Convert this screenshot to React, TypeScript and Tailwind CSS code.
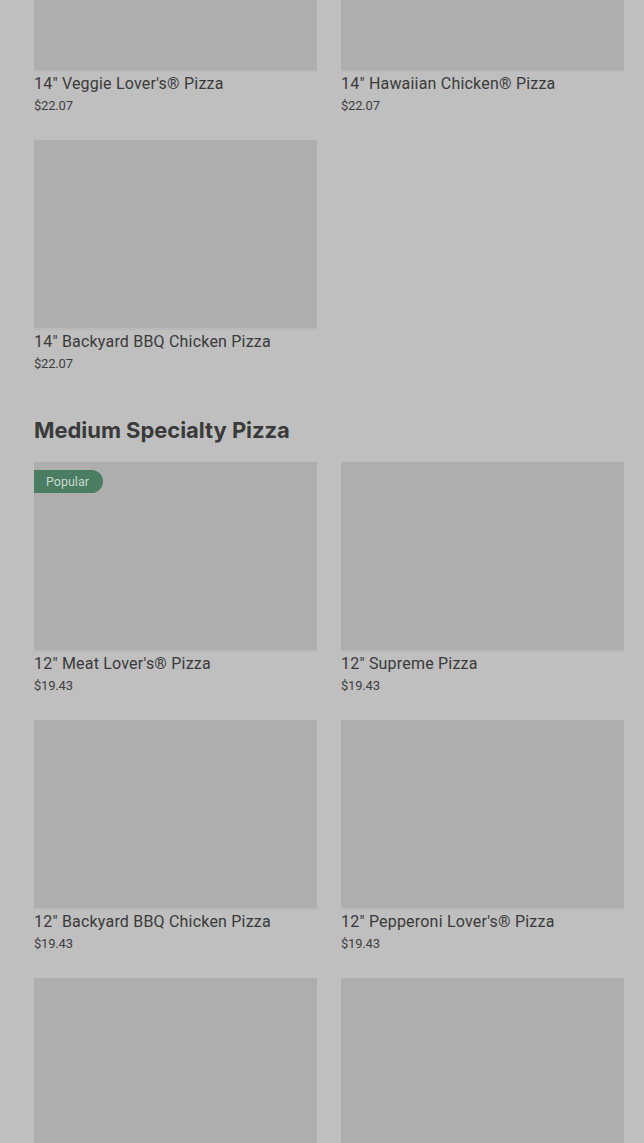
import React from "react";

type Item = { name: string; price: string; popular?: boolean };

const large: Item[] = [
  { name: "14\" Veggie Lover's® Pizza", price: "$22.07" },
  { name: "14\" Hawaiian Chicken® Pizza", price: "$22.07" },
  { name: "14\" Backyard BBQ Chicken Pizza", price: "$22.07" },
];

const medium: Item[] = [
  { name: "12\" Meat Lover's® Pizza", price: "$19.43", popular: true },
  { name: "12\" Supreme Pizza", price: "$19.43" },
  { name: "12\" Backyard BBQ Chicken Pizza", price: "$19.43" },
  { name: "12\" Pepperoni Lover's® Pizza", price: "$19.43" },
  { name: "12\" Pizza", price: "$19.43" },
  { name: "12\" Pizza", price: "$19.43" },
];

const ProductCard = ({ item, last }: { item: Item; last?: boolean }) => (
  <div className="flex flex-col">
    <div className="relative h-[188px] bg-[#aeaeae]">
      {item.popular && (
        <span className="absolute left-0 top-2 rounded-r-full bg-[#4a7d62] py-[3px] pl-3 pr-[14px] text-[12.5px] leading-[17px] text-[#c9d9cf]">
          Popular
        </span>
      )}
    </div>
    <div className="h-[2px] bg-[#b9b9b9]" />
    {!last && (
      <>
        <div className="pt-[1px] text-[16px] leading-[22px] tracking-[0.2px] text-[#3a3a3a]">{item.name}</div>
        <div className="text-[13px] leading-[22px] tracking-[-0.2px] text-[#404040]">{item.price}</div>
      </>
    )}
  </div>
);

export default function App() {
  return (
    <div
      className="h-[1143px] overflow-hidden bg-[#bfbfbf]"
      style={{ fontFamily: "Roboto, 'Liberation Sans', sans-serif" }}
    >
      <div className="-mt-[118px] pl-[34px] pr-[20px]">
        <div className="grid grid-cols-2 gap-x-6 gap-y-[23px]">
          {large.map((it, i) => (
            <ProductCard key={i} item={it} />
          ))}
        </div>
        <h2
          className="mt-[40px] mb-[17px] text-[22px] font-bold leading-[30px] tracking-[-0.05px] text-[#3a3a3a]"
          style={{ fontFamily: "Inter, 'Liberation Sans', sans-serif" }}
        >
          Medium Specialty Pizza
        </h2>
        <div className="grid grid-cols-2 gap-x-6 gap-y-[23px]">
          {medium.map((it, i) => (
            <ProductCard key={i} item={it} last={i >= 4} />
          ))}
        </div>
      </div>
    </div>
  );
}
